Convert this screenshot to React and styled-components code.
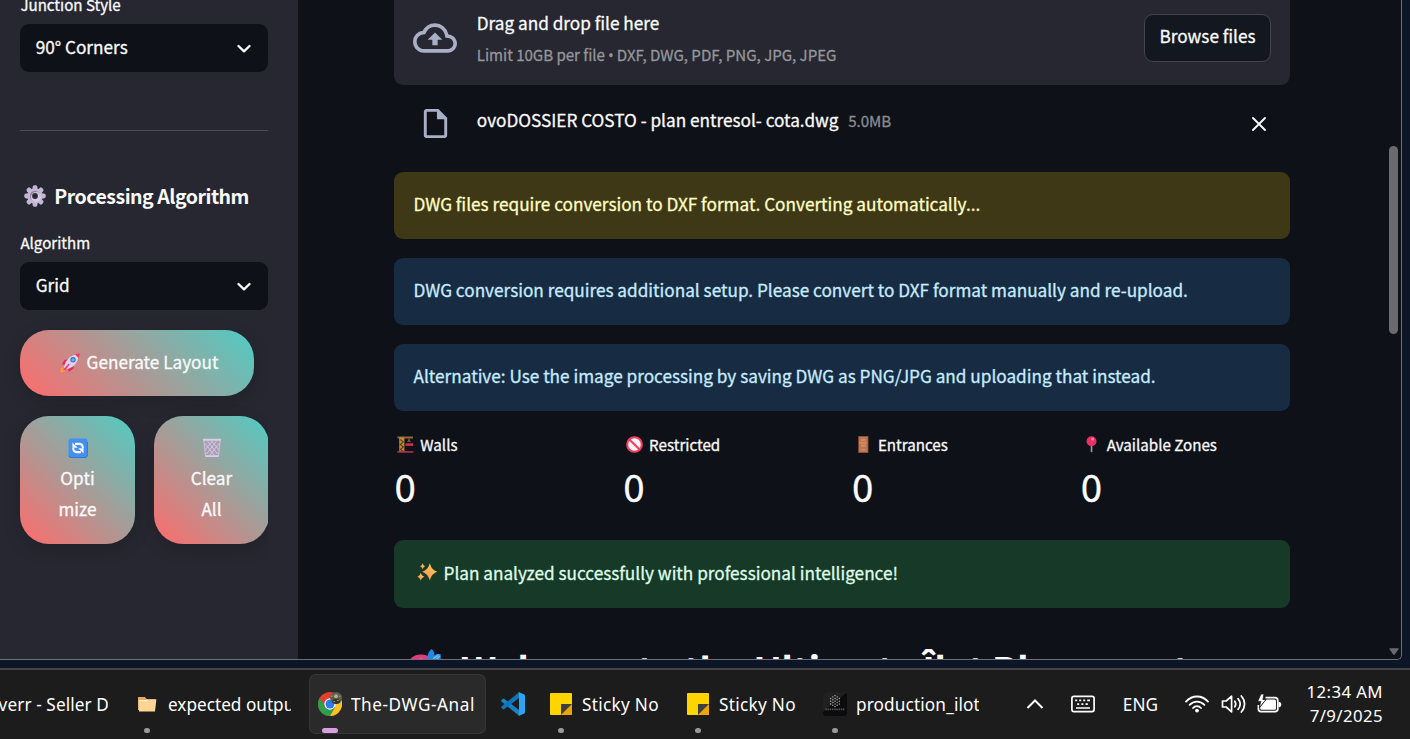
import React from "react";
import styled, { createGlobalStyle } from "styled-components";

const GlobalStyle = createGlobalStyle`
  * { box-sizing: border-box; }
  html, body { margin: 0; padding: 0; background: #0d1626; overflow: hidden; }
  svg { display: block; flex: none; }
`;

const sans = `"Noto Sans CJK SC", "Noto Sans", sans-serif`;

const Screen = styled.div`
  width: 1410px;
  height: 739px;
  display: flex;
  flex-direction: column;
  overflow: hidden;
  background: #0d1626;
  font-family: ${sans};
  color: #fafafa;
`;

const BrowserWindow = styled.div`
  flex: none;
  width: 1402px;
  height: 660px;
  display: flex;
  overflow: hidden;
  background: #0e1117;
  border: 1px solid #6b7079;
  border-top: 0;
  border-left: 0;
  border-bottom-right-radius: 5px;
  -webkit-text-stroke: 0.3px currentColor;
`;

const Sidebar = styled.aside`
  width: 298px;
  flex: none;
  padding-left: 20px;
  background: #262730;
`;

const SidebarBody = styled.div`
  width: 248px;
  height: 659px;
  overflow: hidden;
  margin-left: -20px;
  padding-left: 20px;
  box-sizing: content-box;
`;

const FieldLabel = styled.div`
  height: 24px;
  margin-top: ${(p) => p.$top || 0}px;
  padding-left: 0.4px;
  font-size: 15.1px;
  line-height: 24px;
  white-space: nowrap;
`;

const Select = styled.div`
  height: 48px;
  margin-top: ${(p) => p.$top || 0}px;
  padding: 0 17.5px 3px 15.7px;
  display: flex;
  align-items: center;
  justify-content: space-between;
  border-radius: 9px;
  background: #0e1117;
  font-size: 17.2px;
  line-height: 28px;
  white-space: nowrap;

  svg { margin-top: 4px; }
`;

const Divider = styled.hr`
  height: 1px;
  margin: 58px 0 0;
  border: 0;
  background: #4c4d55;
`;

const SectionTitle = styled.h3`
  height: 32px;
  margin: 50px 0 0;
  display: flex;
  align-items: center;
  gap: 7.8px;
  padding-left: 4.4px;
  font-size: 19.5px;
  font-weight: 700;
  line-height: 32px;
  letter-spacing: -0.48px;
  white-space: nowrap;
  -webkit-text-stroke: 0;

  span { margin-top: -2px; }
  svg { margin-top: -2px; }
`;

const GradientButton = styled.button`
  width: ${(p) => p.$w}px;
  height: ${(p) => p.$h}px;
  flex: none;
  margin: 0;
  padding: ${(p) => (p.$stacked ? "0 0 6px" : "0 0 4px 4px")};
  display: flex;
  flex-direction: ${(p) => (p.$stacked ? "column" : "row")};
  align-items: center;
  justify-content: center;
  gap: ${(p) => (p.$stacked ? 0 : 7)}px;
  border: 0;
  border-radius: 29px;
  background: linear-gradient(45deg, #ff6b6b, #4ecdc4);
  box-shadow: 0 5px 18px rgba(0, 0, 0, 0.16);
  color: #fafafa;
  font-family: ${sans};
  font-size: 17.2px;
  line-height: 31px;
  white-space: nowrap;
  -webkit-text-stroke: 0.3px currentColor;
`;

const EmojiLine = styled.span`
  height: 31px;
  display: flex;
  align-items: center;
  padding-top: 3px;
`;

const ButtonStack = styled.div`
  margin-top: 20px;
  display: flex;
  flex-direction: column;
  gap: 20px;
`;

const ButtonRow = styled.div`
  display: flex;
  gap: 19px;
`;

const Main = styled.main`
  flex: 1;
  min-width: 0;
  padding: 0 96px;
  overflow: hidden;
`;

const Uploader = styled.section`
  height: 85px;
  padding: 0 19px;
  display: flex;
  align-items: flex-start;
  border-radius: 0 0 9px 9px;
  background: #262730;
`;

const CloudSlot = styled.div`
  width: 63.8px;
  padding-top: 16px;
`;

const UploadText = styled.div`
  flex: 1;
  padding-top: 9px;
`;

const UploadTitle = styled.div`
  height: 28px;
  font-size: 17.2px;
  line-height: 28px;
`;

const UploadHint = styled.div`
  height: 24px;
  margin-top: 5px;
  color: #95969b;
  font-size: 15.1px;
  line-height: 24px;
  letter-spacing: -0.03px;

  span { font-family: "Noto Sans", sans-serif; font-size: 14px; line-height: 1; }
`;

const BrowseButton = styled.button`
  width: 127px;
  height: 48px;
  margin: 14px 0 0;
  padding: 0 0 5px;
  border: 1px solid #42444c;
  border-radius: 9px;
  background: #131720;
  color: #fafafa;
  font-family: ${sans};
  font-size: 17.2px;
  white-space: nowrap;
  -webkit-text-stroke: 0.3px currentColor;
`;

const FileRow = styled.div`
  height: 87px;
  padding: 0 24px 11px 24px;
  display: flex;
  align-items: center;
`;

const FileName = styled.div`
  margin: -7px 0 0 23.8px;
  font-size: 17.2px;
  line-height: 28px;
  white-space: nowrap;
`;

const FileSize = styled.div`
  flex: 1;
  margin: -6px 0 0 9.6px;
  color: #8b8c92;
  font-size: 15.1px;
  line-height: 24px;
`;

const CloseSlot = styled.div`
  padding-top: 2px;
`;

const alertTones = {
  warning: { bg: "#3e3817", fg: "#ffffc2" },
  info: { bg: "#172c43", fg: "#c7ebff" },
  success: { bg: "#173928", fg: "#dffde9" },
};

const Alert = styled.div`
  height: ${(p) => p.$h || 67}px;
  margin-bottom: ${(p) => p.$gap ?? 19}px;
  padding: 0 ${(p) => p.$inset ?? 19.5}px 4px;
  display: flex;
  align-items: center;
  gap: 6px;
  border-radius: 9px;
  background: ${(p) => alertTones[p.$tone].bg};
  color: ${(p) => alertTones[p.$tone].fg};
  font-size: 17.2px;
  line-height: 28px;
  white-space: nowrap;

  span { padding-top: 2px; }
`;

const Metrics = styled.div`
  height: 110px;
  padding-top: 2px;
  display: grid;
  grid-template-columns: repeat(4, 209px);
  column-gap: 19.8px;
`;

const MetricLabel = styled.div`
  height: 24px;
  display: flex;
  align-items: center;
  gap: 6.3px;
  font-size: 15.15px;
  line-height: 24px;
  white-space: nowrap;
`;

const MetricIconSlot = styled.span`
  padding: 1px 0 0 3px;
  display: flex;
`;

const MetricValue = styled.div`
  height: 56px;
  margin-top: 1px;
  padding-left: 0.4px;
  font-size: 38.5px;
  line-height: 56px;
`;

const WelcomeTitle = styled.h1`
  height: 60px;
  margin: 31px 0 0;
  padding-left: 12px;
  display: flex;
  align-items: flex-start;
  font-size: 38.5px;
  font-weight: 700;
  line-height: 60px;
  letter-spacing: -0.62px;
  white-space: nowrap;
  -webkit-text-stroke: 0;

  span { margin-left: 17px; }
  svg { margin-top: 8px; }
`;

const ScrollTrack = styled.div`
  width: 15px;
  flex: none;
  padding: 146px 3px 4px 3px;
  display: flex;
  flex-direction: column;
  justify-content: space-between;
  align-items: center;
`;

const ScrollThumb = styled.div`
  width: 9px;
  height: 188px;
  border-radius: 5px;
  background: #6b6b6f;
`;

const Taskbar = styled.footer`
  height: 71px;
  flex: none;
  margin-top: 8px;
  padding-top: 4px;
  display: flex;
  align-items: flex-start;
  gap: 6px;
  border-top: 2px solid #434343;
  background: #1c1c1c;
  font-family: "Noto Sans", sans-serif;
  font-size: 17.2px;
  color: #ffffff;
`;

const Task = styled.div`
  width: ${(p) => p.$w}px;
  height: 60px;
  flex: none;
  margin-left: ${(p) => p.$shift || 0}px;
  position: relative;
  display: flex;
  align-items: center;
  gap: 9px;
  padding: 0 12px 0 9px;
  border-radius: 7px;
  box-shadow: ${(p) => (p.$active ? "inset 0 0 0 1px #363636" : "none")};
  background: ${(p) => (p.$active ? "#2a2a2a" : "transparent")};
`;

const TaskIcon = styled.div`
  width: 24px;
  height: 24px;
  flex: none;
`;

const TaskText = styled.div`
  flex: 1;
  min-width: 0;
  padding-top: 2px;
  overflow: hidden;
  white-space: nowrap;
  line-height: 30px;
  letter-spacing: ${(p) => p.$ls || 0}px;
`;

const TaskMark = styled.div`
  position: absolute;
  bottom: 1px;
  left: ${(p) => (p.$wide ? 13 : 18)}px;
  width: ${(p) => (p.$wide ? 16 : 6)}px;
  height: 5px;
  border-radius: 3px;
  background: ${(p) => (p.$wide ? "#d99fe0" : "#999999")};
`;

const Tray = styled.div`
  flex: 1;
  height: 60px;
  padding-right: 27px;
  display: flex;
  align-items: center;
  justify-content: flex-end;
`;

const TrayItem = styled.div`
  margin-right: ${(p) => p.$gap}px;
`;

const Clock = styled.div`
  width: 77px;
  display: flex;
  flex-direction: column;
  align-items: flex-end;
  font-size: 16.8px;
  line-height: 24px;
  letter-spacing: 0.4px;
  white-space: nowrap;
`;

const Chevron = () => (
  <svg width="14" height="10" viewBox="0 0 14 10" fill="none" stroke="#fafafa" strokeWidth="2.3">
    <path d="M1.5 2 7 7.4 12.5 2" strokeLinecap="round" strokeLinejoin="round" />
  </svg>
);

const CloudUpload = () => (
  <svg width="44" height="44" viewBox="0 0 24 24" fill="#a9afc5">
    <path d="M19.35 10.04A7.49 7.49 0 0 0 12 4C9.11 4 6.6 5.64 5.35 8.04A5.994 5.994 0 0 0 0 14c0 3.31 2.69 6 6 6h13c2.76 0 5-2.24 5-5 0-2.64-2.05-4.78-4.65-4.96zM19 18H6c-2.21 0-4-1.79-4-4 0-2.05 1.53-3.76 3.56-3.97l1.07-.11.5-.95A5.469 5.469 0 0 1 12 6c2.62 0 4.88 1.86 5.39 4.43l.3 1.5 1.53.11A2.98 2.98 0 0 1 22 15c0 1.65-1.35 3-3 3zM8 13h2.55v3h2.9v-3H16l-4-4z" />
  </svg>
);

const FileIcon = () => (
  <svg width="35" height="35" viewBox="0 0 24 24" fill="#a9afc5">
    <path d="M14 2H6c-1.1 0-1.99.9-1.99 2L4 20c0 1.1.89 2 1.99 2H18c1.1 0 2-.9 2-2V8l-6-6zM6 20V4h7v5h5v11H6z" />
  </svg>
);

const CloseIcon = () => (
  <svg width="14" height="14" viewBox="0 0 14 14" stroke="#fafafa" strokeWidth="1.9" strokeLinecap="round">
    <path d="M1 1l12 12M13 1L1 13" />
  </svg>
);

const Gear = () => (
  <svg width="22" height="22" viewBox="0 0 22 22">
    <g fill="#c3b6d6">
      {[0, 45, 90, 135].map((a) => (
        <rect key={a} x="8.6" y="0.3" width="4.8" height="21.4" rx="1.8" transform={`rotate(${a} 11 11)`} />
      ))}
      <circle cx="11" cy="11" r="7.8" />
    </g>
    <circle cx="11" cy="11" r="5.2" fill="#8f839d" />
    <circle cx="12" cy="12" r="5" fill="#d5cae4" />
    <circle cx="11" cy="11" r="2.9" fill="#2b2a34" />
  </svg>
);

const Rocket = () => (
  <svg width="20" height="20" viewBox="0 0 20 20">
    <path d="M0.5 19.5 1 14.5 4.5 14 6 16 5 18.5z" fill="#ff9b29" />
    <path d="M8 6.2 4.5 7 1.8 11.5 6 12zM14 12 13.4 15.8 8.6 19 8 14.5z" fill="#e8285e" />
    <path d="M4 14.5C5 8 9.5 2.5 16.5 1.5L18.6 3.5C17.5 10.5 12.5 15.3 6 16.3z" fill="#dcd4ec" />
    <path d="M14.5 1.6 19.8 0.2 18.6 5.6C17.8 4 16.5 2.5 14.5 1.6z" fill="#f0345f" />
    <circle cx="13" cy="6.8" r="2.7" fill="#3b78b8" />
    <circle cx="13" cy="6.8" r="1.6" fill="#5db4f5" />
    <path d="M3 16.7 8.7 10.4 9.7 11.4 5.2 17.5z" fill="#f23d78" />
  </svg>
);

const Refresh = () => (
  <svg width="20" height="20" viewBox="0 0 20 20">
    <rect x="0.5" y="0.5" width="19" height="19" rx="2.4" fill="#448ff0" />
    <path d="M1 17.5 Q1 19.5 3 19.5 H17 Q19.4 19.5 19.4 17V4" fill="none" stroke="#3177d7" strokeWidth="1" />
    <g fill="none" stroke="#f3f6ff" strokeWidth="2.1">
      <path d="M7 5.9h4.2c2.4 0 3.6 1.6 3.6 4.3" />
      <path d="M13 14.1H8.8c-2.4 0-3.6-1.6-3.6-4.3" />
    </g>
    <path d="M4.4 4.4v5.4h5.4zM15.6 15.6v-5.4h-5.4z" fill="#f3f6ff" />
  </svg>
);

const Trash = () => (
  <svg width="20" height="20" viewBox="0 0 20 20">
    <path d="M1.8 2.3H18.2L16.6 18.6H3.4z" fill="#a99db8" />
    <g stroke="#ddd4e7" strokeWidth="0.8" fill="none">
      <path d="M2.6 5 12.5 17.5M5.5 3 15.5 16M9.5 3 17 12M17.4 5 7.5 17.5M14.5 3 4.5 16M10.5 3 3 12" />
    </g>
    <path d="M1.8 2.3 3.6 18.4M18.2 2.3 16.4 18.4" stroke="#c8bdd5" strokeWidth="1.2" />
    <rect x="0.8" y="0.8" width="18.4" height="1.9" rx="0.9" fill="#d9cfe4" />
    <rect x="3.2" y="17.2" width="13.6" height="1.7" rx="0.8" fill="#d9cfe4" />
  </svg>
);

const Crane = () => (
  <svg width="17" height="17" viewBox="0 0 17 17">
    <rect x="0.5" y="0.5" width="15.5" height="2" fill="#8e6a34" />
    <path d="M2.2 1.5H7.4V15.5H2.2z" fill="#c48a2c" />
    <path d="M3.2 3.5 6.4 6 3.2 8.5 6.4 11 3.2 13.5 6 15" fill="none" stroke="#543f24" strokeWidth="1.1" />
    <path d="M12 2.5v3M10.5 6l1.5-1.5L13.5 6" fill="none" stroke="#9a8b8f" strokeWidth="0.8" />
    <rect x="8.4" y="7.3" width="7.8" height="2.6" fill="#d42b4f" />
    <rect x="0.3" y="15.2" width="16" height="1.5" fill="#c42e52" />
  </svg>
);

const Prohibited = () => (
  <svg width="17" height="17" viewBox="0 0 17 17">
    <circle cx="8.5" cy="8.5" r="7.3" fill="#faf3fb" stroke="#f2405f" strokeWidth="2.1" />
    <path d="M3.4 3.4 13.6 13.6" stroke="#f2405f" strokeWidth="2.1" />
  </svg>
);

const Door = () => (
  <svg width="17" height="17" viewBox="0 0 17 17">
    <rect x="3.2" y="0" width="10.2" height="17" fill="#8f5138" />
    <rect x="4.1" y="1" width="8.4" height="15" fill="#c47a55" />
    <g fill="#ce8964" stroke="#b36c4a" strokeWidth="0.6">
      <rect x="5.5" y="2.2" width="5.6" height="3.4" />
      <rect x="5.5" y="8" width="5.6" height="3.2" />
      <rect x="5.5" y="12.8" width="5.6" height="2.2" />
    </g>
    <rect x="4.4" y="6.5" width="7" height="0.9" fill="#ee9748" />
  </svg>
);

const Pin = () => (
  <svg width="17" height="17" viewBox="0 0 17 17">
    <rect x="7.7" y="8" width="1.7" height="8.2" rx="0.6" fill="#9b92a8" />
    <circle cx="8.5" cy="5.2" r="5" fill="#e92f64" />
    <circle cx="9.6" cy="3" r="1.5" fill="#ff8aa8" />
  </svg>
);

const Sparkles = () => (
  <svg width="21" height="18" viewBox="0 0 21 18">
    <defs>
      <linearGradient id="spark" x1="1" y1="0" x2="0" y2="1">
        <stop offset="0" stopColor="#ffd24a" />
        <stop offset="1" stopColor="#f98b5c" />
      </linearGradient>
    </defs>
    <g fill="url(#spark)">
      <path d="M12.8 0.3C14.3 4.9 15.4 6.6 20.2 8.8 15.4 11 14.3 12.9 12.8 17.5 11.3 12.9 10 11 5.2 8.8 10 6.6 11.3 4.9 12.8 0.3z" />
      <path d="M5.6 0.2C6.2 2 6.6 2.4 8.2 3.2 6.6 4 6.2 4.4 5.6 6.2 5 4.4 4.6 4 2.9 3.2 4.6 2.4 5 2 5.6 0.2z" />
      <path d="M3.8 9.8C4.6 12.2 5.1 12.8 7.4 13.8 5.1 14.8 4.6 15.4 3.8 17.6 3 15.4 2.4 14.8 0.3 13.8 2.4 12.8 3 12.2 3.8 9.8z" />
    </g>
  </svg>
);

const Target = () => (
  <svg width="38" height="46" viewBox="0 0 38 46">
    <circle cx="15" cy="23" r="15.4" fill="#e23a7c" />
    <circle cx="15" cy="23" r="11.2" fill="#f2e9f6" />
    <circle cx="15" cy="23" r="8" fill="#e23a7c" />
    <path d="M15 22 23 12" stroke="#8c7ba0" strokeWidth="2" />
    <path d="M22 14C21 9 21.5 6 25.5 2 28.2 4 28.6 6 28.4 8.6L31 7H34.6V9.6L35 14 26 18z" fill="#1f87e4" />
    <path d="M27 12 32.5 7.8M30 12.5 34 9" stroke="#5fc0f3" strokeWidth="1.6" />
  </svg>
);

const FolderIcon = () => (
  <svg width="24" height="24" viewBox="0 0 24 24">
    <path d="M3 5H10L12 7.5H20V18H3z" fill="#e9a765" />
    <path d="M3.4 8.2H12l1.6-.9H21.4L20 19.4H4z" fill="#ffd596" />
    <path d="M4.6 8.6h7l1-1" stroke="#fff3dc" strokeWidth="1.4" fill="none" />
  </svg>
);

const ChromeIcon = () => (
  <svg width="24" height="24" viewBox="0 0 24 24">
    <circle cx="12" cy="12" r="12" fill="#e43e2f" />
    <path d="M1.6 6A12 12 0 0 0 12 24L17.2 15 6.8 15z" fill="#2b9f4b" />
    <path d="M22.4 6A12 12 0 0 1 12 24L17.2 15 12 6z" fill="#fcc31e" />
    <path d="M1.6 6 6.8 15 12 6z" fill="#e43e2f" />
    <path d="M1.6 6 6.8 15A6 6 0 0 1 6.5 12z" fill="#2b9f4b" />
    <circle cx="12" cy="12" r="5.7" fill="#ffffff" />
    <circle cx="12" cy="12" r="4.5" fill="#2f7af0" />
    <circle cx="18.1" cy="6" r="6" fill="#59604e" />
    <path d="M14 10.3c.5-2.7 2-3.7 4-3.7s3.7 1.2 4.2 3.8A6 6 0 0 1 14 10.3z" fill="#343a2e" />
    <circle cx="18" cy="4.2" r="2" fill="#c5a78b" />
    <path d="M15.5 9.5h1.4M19 8.4h1.6M13.2 4.2h1.6M21.2 4.2h1.5" stroke="#a3a38f" strokeWidth="1" />
  </svg>
);

const CodeIcon = () => (
  <svg width="24" height="24" viewBox="0 0 24 24">
    <path d="M0.3 8.3 2 6.7Q2.6 6.3 3.2 6.7L18 18V23.8L0.5 9.5Q-.1 8.8.3 8.3z" fill="#1584c7" />
    <path d="M0.3 15.7 2 17.3Q2.6 17.7 3.2 17.3L18 6V.2L.5 14.5Q-.1 15.2.3 15.7z" fill="#0f75b8" />
    <path d="M17.2.2Q17.8-.1 18.3.2L23.2 2.5Q24 3 24 3.8V20.2Q24 21 23.2 21.5L18.3 23.8Q17.5 24.1 17 23.5 18 24 18 22.8V1.2Q18 .1 17.2.2z" fill="#2ba5f0" />
  </svg>
);

const StickyIcon = () => (
  <svg width="24" height="24" viewBox="0 0 24 24">
    <path d="M2 1H22Q23 1 23 2V22Q23 23 22 23H2Q1 23 1 22V2Q1 1 2 1z" fill="#ffd400" />
    <path d="M12 23 23 12V22Q23 23 22 23z" fill="#efa500" />
    <path d="M12 12H23L12 23z" fill="#3f3f3f" />
  </svg>
);

const BoxIcon = () => (
  <svg width="24" height="24" viewBox="0 0 24 24">
    <rect width="24" height="24" rx="3.5" fill="#0b0b0c" />
    <path d="M0 4Q0 0 4 0H24L0 20z" fill="#202021" />
    <g fill="#a8a8a8">
      {[
        [12, 3.6], [9.8, 5], [14.2, 5], [7.6, 6.4], [12, 6.4], [16.4, 6.4], [9.8, 7.8], [14.2, 7.8], [7.6, 9.2],
        [12, 9.2], [16.4, 9.2], [9.8, 10.6], [14.2, 10.6], [7.6, 12], [12, 12], [16.4, 12], [9.8, 13.2], [14.2, 13.2], [12, 14.6],
      ].map(([x, y]) => (
        <circle key={`${x}-${y}`} cx={x} cy={y} r="0.75" />
      ))}
    </g>
    <path d="M2.3 17.3H21.7" stroke="#55555a" strokeWidth="1.7" strokeDasharray="1.5 .7" />
  </svg>
);

const TrayChevron = () => (
  <svg width="18" height="12" viewBox="0 0 18 12" fill="none" stroke="#fff" strokeWidth="2">
    <path d="M1.5 10 9 2.5 16.5 10" />
  </svg>
);

const KeyboardIcon = () => (
  <svg width="24" height="18" viewBox="0 0 24 18">
    <rect x="0.9" y="1.4" width="22.2" height="15.2" rx="2" fill="none" stroke="#fff" strokeWidth="1.7" />
    <path d="M4.2 5.4h2M8.2 5.4h2M12.2 5.4h2M16.2 5.4h2.8M6.2 9.2h2M10.4 9.2h2M14.6 9.2h2.2M5 13h14" stroke="#fff" strokeWidth="1.7" />
  </svg>
);

const WifiIcon = () => (
  <svg width="24" height="20" viewBox="0 0 24 20" fill="none" stroke="#fff" strokeWidth="1.8" strokeLinecap="round">
    <path d="M1 7.6C7.3.8 16.7.8 23 7.6" />
    <path d="M4.6 10.9C8.8 6.4 15.2 6.4 19.4 10.9" />
    <path d="M8 14c2.3-2.5 5.7-2.5 8 0" />
    <circle cx="12" cy="16.6" r="1.9" fill="#fff" stroke="none" />
  </svg>
);

const SpeakerIcon = () => (
  <svg width="26" height="20" viewBox="0 0 26 20" fill="none" stroke="#fff" strokeWidth="1.7" strokeLinecap="round" strokeLinejoin="round">
    <path d="M1.5 7H5.2L10.6 2.2V17.8L5.2 13H1.5z" />
    <path d="M13.8 7.2c1.2 1.7 1.2 3.9 0 5.6M17 4.6c2.7 3.3 2.7 7.5 0 10.8M20.3 2c4.3 4.7 4.3 11.3 0 16" />
  </svg>
);

const BatteryIcon = () => (
  <svg width="25" height="20" viewBox="0 0 25 20">
    <path d="M8.5 3.6H18Q20.8 3.6 20.8 6.4V15Q20.8 17.6 18 17.6H4Q1.4 17.6 1.4 15V11" fill="none" stroke="#fff" strokeWidth="1.7" />
    <path d="M9.4 5.5H17.4Q19 5.5 19 7V14.2Q19 15.8 17.4 15.8H5Q3.3 15.8 3.3 14.2V13z" fill="#fff" />
    <path d="M21.5 8h1.2q1.6.3 1.6 2.6t-1.6 2.6h-1.2z" fill="#fff" />
    <path d="M4 0 .6 7.4H3.8L2.2 13.8 9 5.5H5.9L7 0z" fill="#fff" stroke="#1c1c1c" strokeWidth="0.8" />
  </svg>
);

const ScrollArrow = () => (
  <svg width="10" height="7" viewBox="0 0 10 7">
    <path d="M.8.2H9.2Q10 .3 9.6 1L5.8 6.4Q5 7.2 4.2 6.4L.4 1Q0 .3.8.2z" fill="#6b6b6f" />
  </svg>
);

const metrics = [
  { label: "Walls", icon: <Crane /> },
  { label: "Restricted", icon: <Prohibited /> },
  { label: "Entrances", icon: <Door /> },
  { label: "Available Zones", icon: <Pin /> },
];

const tasks = [
  { text: "Fiverr - Seller Dashboard", w: 177, shift: -57, ls: 0.1 },
  { text: "expected output", w: 177, icon: <FolderIcon />, mark: true },
  { text: "The-DWG-Analyzer", w: 177, icon: <ChromeIcon />, mark: true, active: true, ls: 0.55 },
  { w: 42, icon: <CodeIcon /> },
  { text: "Sticky Notes", w: 131, icon: <StickyIcon />, mark: true, ls: 0.3 },
  { text: "Sticky Notes", w: 131, icon: <StickyIcon />, mark: true, ls: 0.3 },
  { text: "production_ilot", w: 177, icon: <BoxIcon />, mark: true, ls: 0.13 },
];

export default function App() {
  return (
    <Screen>
      <GlobalStyle />
      <BrowserWindow>
        <Sidebar>
          <SidebarBody>
            <FieldLabel $top={-8}>Junction Style</FieldLabel>
            <Select $top={8}>
              90° Corners
              <Chevron />
            </Select>
            <Divider />
            <SectionTitle>
              <Gear />
              <span>Processing Algorithm</span>
            </SectionTitle>
            <FieldLabel $top={17}>Algorithm</FieldLabel>
            <Select $top={8}>
              Grid
              <Chevron />
            </Select>
            <ButtonStack>
              <GradientButton $w={234} $h={66}>
                <EmojiLine><Rocket /></EmojiLine>
                Generate Layout
              </GradientButton>
              <ButtonRow>
                <GradientButton $w={115} $h={128} $stacked>
                  <EmojiLine><Refresh /></EmojiLine>
                  <span>Opti</span>
                  <span>mize</span>
                </GradientButton>
                <GradientButton $w={115} $h={128} $stacked>
                  <EmojiLine><Trash /></EmojiLine>
                  <span>Clear</span>
                  <span>All</span>
                </GradientButton>
              </ButtonRow>
            </ButtonStack>
          </SidebarBody>
        </Sidebar>
        <Main>
          <Uploader>
            <CloudSlot><CloudUpload /></CloudSlot>
            <UploadText>
              <UploadTitle>Drag and drop file here</UploadTitle>
              <UploadHint>Limit 10GB per file <span>•</span> DXF, DWG, PDF, PNG, JPG, JPEG</UploadHint>
            </UploadText>
            <BrowseButton>Browse files</BrowseButton>
          </Uploader>
          <FileRow>
            <FileIcon />
            <FileName>ovoDOSSIER COSTO - plan entresol- cota.dwg</FileName>
            <FileSize>5.0MB</FileSize>
            <CloseSlot><CloseIcon /></CloseSlot>
          </FileRow>
          <Alert $tone="warning">DWG files require conversion to DXF format. Converting automatically...</Alert>
          <Alert $tone="info">DWG conversion requires additional setup. Please convert to DXF format manually and re-upload.</Alert>
          <Alert $tone="info">Alternative: Use the image processing by saving DWG as PNG/JPG and uploading that instead.</Alert>
          <Metrics>
            {metrics.map((m) => (
              <div key={m.label}>
                <MetricLabel>
                  <MetricIconSlot>{m.icon}</MetricIconSlot>
                  {m.label}
                </MetricLabel>
                <MetricValue>0</MetricValue>
              </div>
            ))}
          </Metrics>
          <Alert $tone="success" $h={68} $gap={0} $inset={22.5}>
            <Sparkles />
            <span>Plan analyzed successfully with professional intelligence!</span>
          </Alert>
          <WelcomeTitle>
            <Target />
            <span>Welcome to the Ultimate Îlot Placement</span>
          </WelcomeTitle>
        </Main>
        <ScrollTrack>
          <ScrollThumb />
          <ScrollArrow />
        </ScrollTrack>
      </BrowserWindow>
      <Taskbar>
        {tasks.map((t, i) => (
          <Task key={i} $w={t.w} $shift={t.shift} $active={t.active}>
            <TaskIcon>{t.icon}</TaskIcon>
            {t.text && <TaskText $ls={t.ls}>{t.text}</TaskText>}
            {t.mark && <TaskMark $wide={t.active} />}
          </Task>
        ))}
        <Tray>
          <TrayItem $gap={27}><TrayChevron /></TrayItem>
          <TrayItem $gap={28}><KeyboardIcon /></TrayItem>
          <TrayItem $gap={27}>ENG</TrayItem>
          <TrayItem $gap={12}><WifiIcon /></TrayItem>
          <TrayItem $gap={10}><SpeakerIcon /></TrayItem>
          <TrayItem $gap={24}><BatteryIcon /></TrayItem>
          <Clock>
            <span>12:34 AM</span>
            <span>7/9/2025</span>
          </Clock>
        </Tray>
      </Taskbar>
    </Screen>
  );
}
